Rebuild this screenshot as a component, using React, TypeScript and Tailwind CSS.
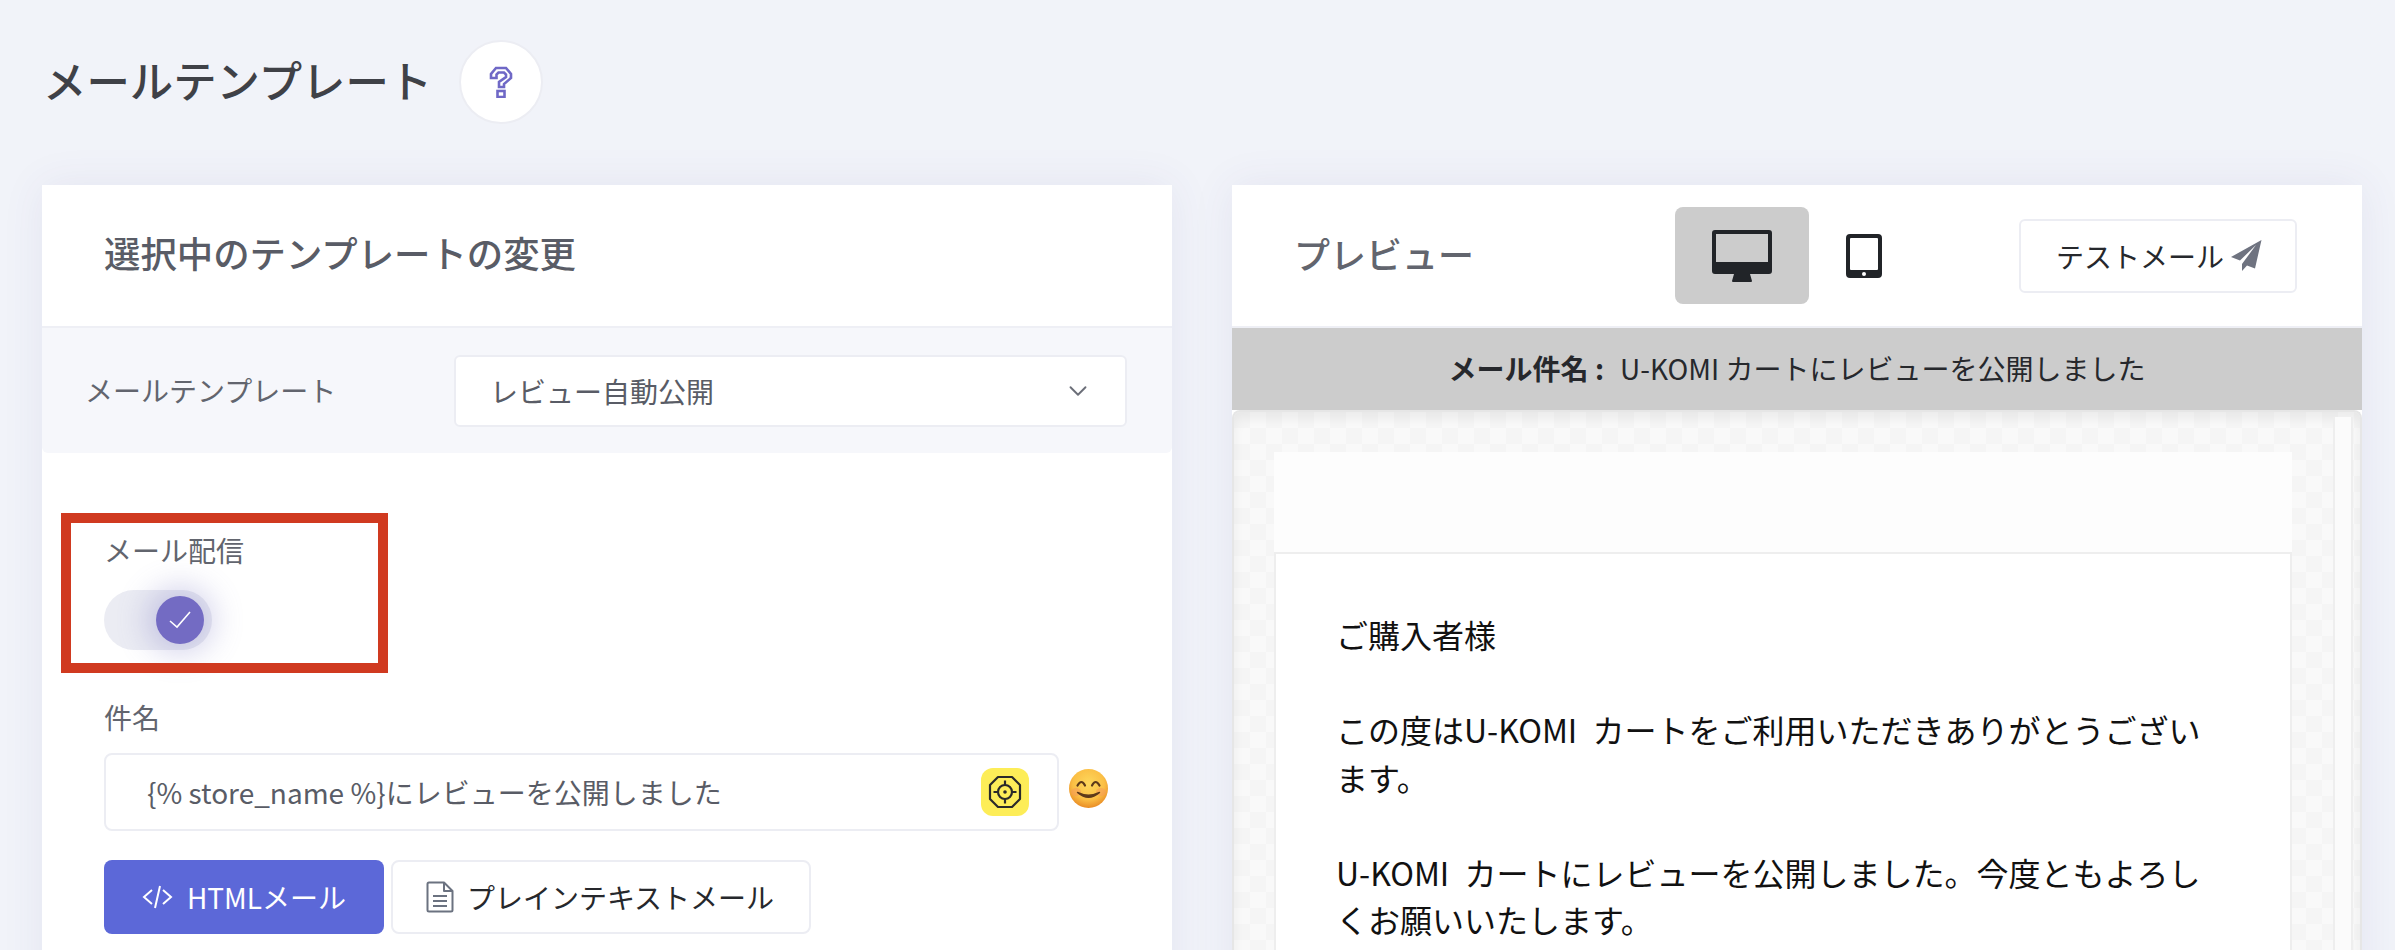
import React from "react";
import { ChevronDown } from "lucide-react";

const font = "font-['Noto_Sans_CJK_JP','Noto_Sans',sans-serif]";

function HelpIcon() {
  return (
    <svg width="24" height="32" viewBox="0 0 24 32" fill="none" stroke="#6f68c6" strokeWidth="2.6">
      <path d="M2 12 V8 L7 2 H17 L22 8 V12 L15 18 V21 H10 V16 L17 11 V8.5 L15 6.5 H9.5 L7.5 8.5 V12 Z" />
      <rect x="8.5" y="25" width="7" height="6" />
    </svg>
  );
}

function TargetIcon() {
  return (
    <svg width="36" height="36" viewBox="0 0 36 36" fill="none" stroke="#2a2a2a" strokeWidth="2.2">
      <path d="M11 3 H25 L33 11 V25 L25 33 H11 L3 25 V11 Z" strokeLinejoin="round" />
      <circle cx="18" cy="18" r="7" />
      <circle cx="18" cy="18" r="1.8" fill="#2a2a2a" stroke="none" />
      <path d="M18 6.5 V11 M18 25 V29.5 M6.5 18 H11 M25 18 H29.5" />
    </svg>
  );
}

function SmileEmoji() {
  return (
    <svg width="39" height="39" viewBox="0 0 39 39">
      <defs>
        <radialGradient id="face" cx="50%" cy="38%" r="62%">
          <stop offset="0%" stopColor="#fdd85c" />
          <stop offset="65%" stopColor="#fbbf45" />
          <stop offset="100%" stopColor="#e98c25" />
        </radialGradient>
      </defs>
      <circle cx="19.5" cy="19.5" r="19.5" fill="url(#face)" />
      <ellipse cx="7" cy="23" rx="5" ry="4" fill="#f59a5a" opacity="0.55" />
      <ellipse cx="32" cy="23" rx="5" ry="4" fill="#f59a5a" opacity="0.55" />
      <path d="M8.5 16.5 Q12.5 9.5 16 16.5 M23 16.5 Q26.5 9.5 30.5 16.5" fill="none" stroke="#5d3a1a" strokeWidth="2.2" strokeLinecap="round" />
      <path d="M8.5 23.5 Q19.5 33 30.5 23.5 Q19.5 29 8.5 23.5 Z" fill="#5d3a1a" stroke="#5d3a1a" strokeWidth="1.4" strokeLinejoin="round" />
    </svg>
  );
}

function CodeIcon() {
  return (
    <svg width="31" height="24" viewBox="0 0 31 24" fill="none" stroke="#fff" strokeWidth="2">
      <path d="M10 5 L2 12 L10 19 M21 5 L29 12 L21 19 M18 1 L13 23" />
    </svg>
  );
}

function DocIcon() {
  return (
    <svg width="28" height="32" viewBox="0 0 28 32" fill="none" stroke="#6b7280" strokeWidth="2">
      <path d="M3 1.5 H18 L26.5 10 V29 Q26.5 30.5 25 30.5 H3 Q1.5 30.5 1.5 29 V3 Q1.5 1.5 3 1.5 Z M18 1.5 V10 H26.5" strokeLinejoin="round" />
      <path d="M7 15 H21 M7 20 H21 M7 25 H21" />
    </svg>
  );
}

function CheckIcon() {
  return (
    <svg width="24" height="20" viewBox="0 0 24 20" fill="none" stroke="#fff" strokeWidth="1.6">
      <path d="M2 11 L9 17 L22 2" />
    </svg>
  );
}

function MonitorIcon() {
  return (
    <svg width="60" height="52" viewBox="0 0 60 52">
      <path
        fillRule="evenodd"
        fill="#212428"
        d="M3 0 H57 Q60 0 60 3 V41 Q60 44 57 44 H38 L40 51 Q40 52 39 52 H21 Q20 52 20 51 L22 44 H3 Q0 44 0 41 V3 Q0 0 3 0 Z M4 4 V32 H56 V4 Z"
      />
    </svg>
  );
}

function TabletIcon() {
  return (
    <svg width="36" height="44" viewBox="0 0 36 44">
      <path
        fillRule="evenodd"
        fill="#212428"
        d="M4 0 H32 Q36 0 36 4 V40 Q36 44 32 44 H4 Q0 44 0 40 V4 Q0 0 4 0 Z M5 4 Q4 4 4 5 V35 Q4 36 5 36 H31 Q32 36 32 35 V5 Q32 4 31 4 Z"
      />
      <circle cx="18" cy="40" r="2" fill="#ffffff" />
    </svg>
  );
}

function PlaneIcon() {
  return (
    <svg width="31" height="31" viewBox="0 0 31 31">
      <path fill="#6f7380" d="M30.5 0 L0 17 L9 20.5 L25 5 L11 24 L11 31 L16 25.5 L24 28.5 Z" />
    </svg>
  );
}

function EditCard() {
  return (
    <section className="w-[1130px] h-[900px] shrink-0 bg-white shadow-[0_0_40px_rgba(82,63,135,0.08)]">
      <div className="h-[143px] border-b-2 border-[#eeeff5] pl-[62px] pb-[6px] flex items-center">
        <h2 className="text-[36.4px] font-medium text-[#595c66] leading-none">選択中のテンプレートの変更</h2>
      </div>
      <div className="h-[125px] bg-[#f6f7fb] rounded-b-md pl-[43px] pr-[45px] flex items-center">
        <span className="w-[369px] shrink-0 text-[28px] text-[#62656e] pb-[2px]">メールテンプレート</span>
        <div className="h-[72px] flex-1 bg-white rounded-md border-2 border-[#ecedf3] pl-[34px] pr-[32px] flex items-center justify-between">
          <span className="text-[28px] text-[#595c66]">レビュー自動公開</span>
          <ChevronDown size={30} strokeWidth={1.5} color="#6b6e78" />
        </div>
      </div>
      <div className="pl-[62px] pt-[80px]">
        <div className="relative">
          <div className="absolute left-[-43px] top-[-20px] w-[327px] h-[160px] border-[10px] border-[#d03a20] pointer-events-none" />
          <div className="h-[40px] flex items-center text-[28px] text-[#62656e] pb-[6px]">メール配信</div>
          <div className="mt-[17px] w-[108px] h-[60px] rounded-full bg-[#ebecf3] flex items-center justify-end pr-[8px]">
            <div className="w-[48px] h-[48px] rounded-full bg-[#736bc3] flex items-center justify-center shadow-[0_0_30px_10px_rgba(110,105,190,0.3)]">
              <CheckIcon />
            </div>
          </div>
        </div>
        <div className="mt-[47px] h-[40px] flex items-center text-[28px] text-[#62656e]">件名</div>
        <div className="mt-[16px] flex items-start">
          <div className="w-[955px] h-[78px] rounded-lg border-2 border-[#ecedf3] pl-[41px] pr-[28px] flex items-center justify-between">
            <span className="text-[28px] text-[#595c66]">{"{% store_name %}にレビューを公開しました"}</span>
            <div className="w-[48px] h-[48px] rounded-xl bg-[#fded58] flex items-center justify-center">
              <TargetIcon />
            </div>
          </div>
          <div className="ml-[10px] mt-[16px]">
            <SmileEmoji />
          </div>
        </div>
        <div className="mt-[29px] flex gap-[7px]">
          <button className="w-[280px] h-[74px] rounded-lg bg-[#5c68d8] text-white text-[28px] flex items-center justify-center gap-[14px]">
            <CodeIcon />
            <span>HTMLメール</span>
          </button>
          <button className="w-[420px] h-[74px] rounded-lg border-2 border-[#ecedf3] bg-white text-[#26282c] text-[28px] pr-[2px] flex items-center justify-center gap-[13px]">
            <DocIcon />
            <span>プレインテキストメール</span>
          </button>
        </div>
      </div>
    </section>
  );
}

function PreviewCard() {
  return (
    <section className="w-[1130px] h-[900px] shrink-0 bg-white shadow-[0_0_40px_rgba(82,63,135,0.08)] flex flex-col">
      <div className="h-[143px] shrink-0 border-b-2 border-[#eeeff5] pl-[62px] pr-[65px] flex items-center">
        <h2 className="w-[381px] shrink-0 text-[36px] font-medium text-[#62656e] leading-none pb-[6px]">プレビュー</h2>
        <div className="w-[134px] h-[97px] rounded-lg bg-[#cccccc] flex items-center justify-center">
          <MonitorIcon />
        </div>
        <div className="ml-[37px] flex items-center">
          <TabletIcon />
        </div>
        <button className="ml-auto w-[278px] h-[74px] rounded-md border-2 border-[#ecedf3] bg-white text-[28px] text-[#26282c] pl-[2px] flex items-center justify-center gap-[7px]">
          <span>テストメール</span>
          <PlaneIcon />
        </button>
      </div>
      <div className="h-[82px] shrink-0 bg-[#cccccc] pb-[2px] flex items-center justify-center text-[28px] text-[#26282c]">
        <strong className="font-bold">メール件名 :</strong>
        <span className="ml-[16px]">U-KOMI カートにレビューを公開しました</span>
      </div>
      <div className="flex-1 min-h-0 overflow-hidden rounded-t-lg border-2 border-b-0 border-[#e6e6e6] bg-[conic-gradient(#f9f9f9_25%,#f5f5f5_0_50%,#f9f9f9_0_75%,#f5f5f5_0)] bg-[length:32px_32px] shadow-[inset_0_6px_12px_rgba(0,0,0,0.06)] flex">
        <div className="w-[1018px] shrink-0 ml-[40px] mt-[40px]">
          <div className="h-[102px] bg-[#fdfdfd] border-b-2 border-[#eeeeee]" />
          <div className="border-x-2 border-[#eeeeee] bg-white h-[500px] pl-[60px] pr-[78px] pt-[57px] text-[32px] leading-[47.5px] text-[#111111] [word-spacing:8px]">
            <p>ご購入者様</p>
            <p className="mt-[47.5px]">この度はU-KOMI カートをご利用いただきありがとうございます。</p>
            <p className="mt-[47.5px]">U-KOMI カートにレビューを公開しました。今度ともよろしくお願いいたします。</p>
          </div>
        </div>
        <div className="w-[20px] shrink-0 ml-[41px] mt-[5px] bg-[#fbfbfb] border-x-2 border-[#eeeeee]" />
      </div>
    </section>
  );
}

export default function App() {
  return (
    <div className={`${font} w-[2395px] h-[950px] overflow-hidden bg-[#f1f3f9]`}>
      <header className="pt-[40px] pl-[43px] h-[185px] flex items-start">
        <div className="h-[84px] flex items-center gap-[27px]">
          <h1 className="text-[43.4px] font-medium text-[#3f4147] leading-none pb-[5px]">メールテンプレート</h1>
          <div className="w-[84px] h-[84px] rounded-full bg-white border-2 border-[#ecedf3] flex items-center justify-center">
            <HelpIcon />
          </div>
        </div>
      </header>
      <main className="flex gap-[60px] pl-[42px]">
        <EditCard />
        <PreviewCard />
      </main>
    </div>
  );
}
